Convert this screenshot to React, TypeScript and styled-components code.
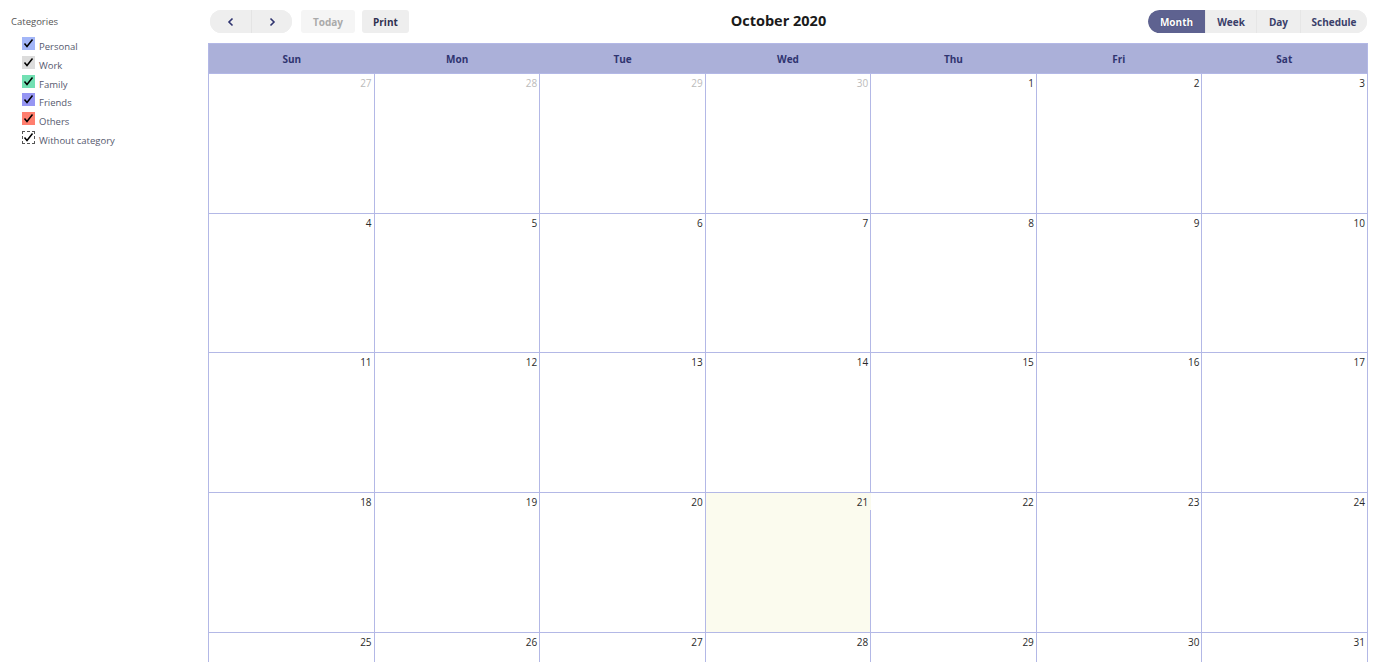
import React from "react";
import styled, { createGlobalStyle } from "styled-components";

const GlobalStyle = createGlobalStyle`
  body {
    margin: 0;
    background: #fff;
    font-family: "Open Sans", "Noto Sans", sans-serif;
  }
`;

const categories = [
  { name: "Personal", color: "#a3b6f8" },
  { name: "Work", color: "#dcdcdc" },
  { name: "Family", color: "#72e0b3" },
  { name: "Friends", color: "#9696f3" },
  { name: "Others", color: "#ff7e6e" },
  { name: "Without category", color: "" },
];

const dayNames = ["Sun", "Mon", "Tue", "Wed", "Thu", "Fri", "Sat"];

const days: { n: number; other?: boolean; today?: boolean }[] = [
  { n: 27, other: true },
  { n: 28, other: true },
  { n: 29, other: true },
  { n: 30, other: true },
  ...Array.from({ length: 31 }, (_, i) => ({ n: i + 1, today: i + 1 === 21 })),
];

function Check() {
  return (
    <svg width="11" height="11" viewBox="0 0 11 11">
      <path d="M1.5 5.5 L4 8.5 L9.5 1.5" fill="none" stroke="#000" strokeWidth="1.5" />
    </svg>
  );
}

function Chevron({ dir }: { dir: "left" | "right" }) {
  return (
    <svg width="8" height="10" viewBox="0 0 8 10">
      <path
        d={dir === "left" ? "M5.5 1.5 L2 5 L5.5 8.5" : "M2.5 1.5 L6 5 L2.5 8.5"}
        fill="none"
        stroke="#2f3470"
        strokeWidth="1.6"
      />
    </svg>
  );
}

export default function App() {
  return (
    <>
      <GlobalStyle />
      <Page>
        <Sidebar>
          <SideTitle>Categories</SideTitle>
          {categories.map((c) => (
            <CategoryRow key={c.name}>
              <Box $color={c.color}>
                <Check />
              </Box>
              <CategoryName>{c.name}</CategoryName>
            </CategoryRow>
          ))}
        </Sidebar>
        <Main>
          <Toolbar>
            <Group>
              <Pill>
                <NavButton>
                  <Chevron dir="left" />
                </NavButton>
                <NavButton>
                  <Chevron dir="right" />
                </NavButton>
              </Pill>
              <ToolButton $disabled>Today</ToolButton>
              <ToolButton>Print</ToolButton>
            </Group>
            <Title>October 2020</Title>
            <Pill>
              <ViewButton $active $w={57}>Month</ViewButton>
              <ViewButton $w={51}>Week</ViewButton>
              <ViewButton $w={44}>Day</ViewButton>
              <ViewButton $w={67}>Schedule</ViewButton>
            </Pill>
          </Toolbar>
          <Calendar>
            <HeaderRow>
              {dayNames.map((d) => (
                <HeaderCell key={d}>{d}</HeaderCell>
              ))}
            </HeaderRow>
            <Grid>
              {days.map((d, i) => (
                <Cell key={i} $today={d.today}>
                  <DateLabel $other={d.other} $today={d.today}>
                    {d.n}
                  </DateLabel>
                </Cell>
              ))}
            </Grid>
          </Calendar>
        </Main>
      </Page>
    </>
  );
}

const Page = styled.div`
  display: flex;
  align-items: flex-start;
`;

const Sidebar = styled.div`
  width: 208px;
  flex: none;
  box-sizing: border-box;
  padding: 15px 0 0 11px;
`;

const SideTitle = styled.div`
  font-size: 9.5px;
  color: #555;
  line-height: 13px;
  margin-bottom: 9px;
`;

const CategoryRow = styled.div`
  display: flex;
  align-items: flex-start;
  height: 18.8px;
  padding-left: 11px;
`;

const Box = styled.span<{ $color: string }>`
  width: 13px;
  height: 13px;
  box-sizing: border-box;
  display: flex;
  align-items: center;
  justify-content: center;
  background: ${(p) => p.$color || "#fff"};
  border: ${(p) => (p.$color ? "none" : "1px dashed #555")};
  margin-right: 4px;
`;

const CategoryName = styled.span`
  font-size: 9.5px;
  line-height: 13px;
  padding-top: 3px;
  color: #55596e;
`;

const Main = styled.div`
  flex: 1;
  min-width: 0;
  padding-right: 12px;
`;

const Toolbar = styled.div`
  display: flex;
  align-items: center;
  justify-content: space-between;
  height: 43px;
  padding: 0 1px 0 2px;
  box-sizing: border-box;
`;

const Group = styled.div`
  display: flex;
  align-items: center;
`;

const Pill = styled.div`
  display: flex;
  height: 23px;
  border-radius: 12px;
  overflow: hidden;
  background: #eeeeee;
`;

const NavButton = styled.button`
  width: 41px;
  height: 23px;
  border: none;
  padding: 0;
  background: #eeeeee;
  display: flex;
  align-items: center;
  justify-content: center;
  & + & {
    border-left: 1px solid #e4e4e4;
  }
`;

const ToolButton = styled.button<{ $disabled?: boolean }>`
  height: 23px;
  margin-left: ${(p) => (p.$disabled ? "9px" : "7px")};
  padding: 0 ${(p) => (p.$disabled ? "12px" : "11px")};
  border: none;
  border-radius: 3px;
  background: ${(p) => (p.$disabled ? "#f5f5f5" : "#eeeeee")};
  color: ${(p) => (p.$disabled ? "#aaaaaa" : "#2f3150")};
  font-family: "Open Sans", sans-serif;
  font-weight: 700;
  font-size: 10px;
`;

const Title = styled.div`
  font-size: 14.5px;
  font-weight: 700;
  color: #1a1a1a;
  margin-top: -2px;
`;

const ViewButton = styled.button<{ $active?: boolean; $w: number }>`
  width: ${(p) => p.$w}px;
  height: 23px;
  border: none;
  padding: 0;
  background: ${(p) => (p.$active ? "#5e6290" : "#eeeeee")};
  color: ${(p) => (p.$active ? "#ffffff" : "#3a3f6a")};
  text-shadow: ${(p) => (p.$active ? "0 0 1px #2a2d50" : "none")};
  border-radius: ${(p) => (p.$active ? "12px 0 0 12px" : "0")};
  font-family: "Open Sans", sans-serif;
  font-weight: 700;
  font-size: 10px;
  & + & {
    border-left: 1px solid #e6e6e6;
  }
`;

const Calendar = styled.div`
  border: 1px solid #b3b8e6;
  border-bottom: none;
`;

const HeaderRow = styled.div`
  display: grid;
  grid-template-columns: repeat(7, 1fr);
  height: 29px;
  background: #abb0d9;
  border-bottom: 1px solid #b3b8e6;
`;

const HeaderCell = styled.div`
  display: flex;
  align-items: center;
  justify-content: center;
  font-size: 10px;
  font-weight: 700;
  color: #2f3470;
`;

const Grid = styled.div`
  display: grid;
  grid-template-columns: repeat(7, 1fr);
  grid-auto-rows: 138.7px;
  gap: 1px;
  background: #b3b8e6;
`;

const Cell = styled.div<{ $today?: boolean }>`
  background: ${(p) => (p.$today ? "#fbfbee" : "#ffffff")};
  display: flex;
  flex-direction: column;
  align-items: stretch;
`;

const DateLabel = styled.div<{ $other?: boolean; $today?: boolean }>`
  text-align: right;
  font-size: 10px;
  line-height: 16px;
  height: 16px;
  padding: 1px 1px 0 0;
  margin-right: ${(p) => (p.$today ? "-1px" : "0")};
  padding-right: ${(p) => (p.$today ? "3px" : "2px")};
  position: relative;
  background: ${(p) => (p.$today ? "#fbfbee" : "transparent")};
  color: ${(p) => (p.$other ? "#bbbbbb" : "#2a2a2a")};
`;
